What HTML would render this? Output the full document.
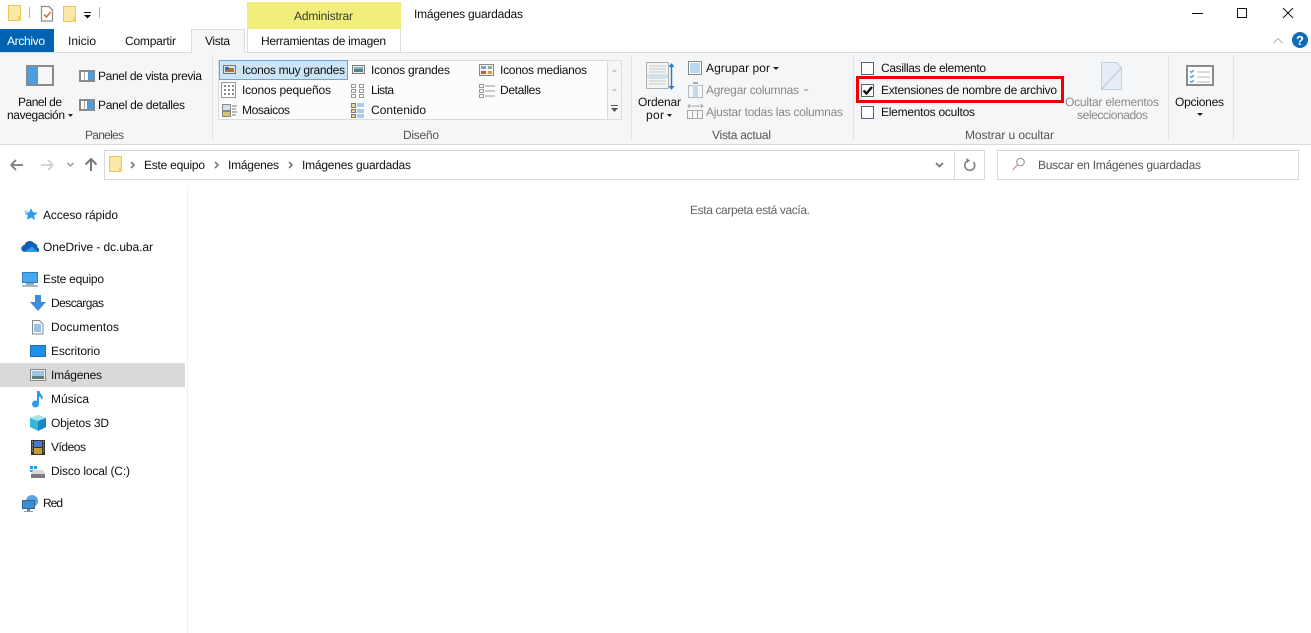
<!DOCTYPE html>
<html lang="es"><head><meta charset="utf-8"><title>Imágenes guardadas</title>
<style>
html,body{margin:0;padding:0;background:#fff;width:1311px;height:633px;overflow:hidden}
svg{display:block}
text{font-family:"Liberation Sans",sans-serif;font-size:12px;fill:#111}
</style></head><body>
<svg width="1311" height="633" viewBox="0 0 1311 633" xmlns="http://www.w3.org/2000/svg" text-rendering="geometricPrecision">
<defs>
<g id="fold"><rect x="0.5" y="0.5" width="12" height="15" fill="#fde9a6" stroke="#e8c85a"/><rect x="10" y="11" width="3" height="5" fill="#f3d060"/></g>
</defs>
<!-- title bar -->
<use href="#fold" x="8" y="5"/>
<rect x="29" y="7" width="1" height="11" fill="#b5b5b5"/>
<path d="M41.500 6.500h7.500l3.500 3.500v11h-11z" fill="#fff" stroke="#8d8d8d" stroke-width="1.300"/>
<path d="M44 14.500l2.500 2.500 4-5" fill="none" stroke="#e8632a" stroke-width="1.500"/>
<use href="#fold" x="63" y="6"/>
<rect x="84" y="12" width="7" height="1" fill="#111"/><path d="M84 15h7l-3.500 3.500z" fill="#111"/>
<rect x="99" y="7" width="1" height="11" fill="#b5b5b5"/>
<rect x="247" y="2" width="154" height="27" fill="#f1ee7c"/>
<text x="294" y="20" textLength="59" lengthAdjust="spacing" style="fill:#3c3c30">Administrar</text>
<text x="414" y="18" textLength="109" lengthAdjust="spacing">Imágenes guardadas</text>
<rect x="1192" y="13" width="11" height="1" fill="#111"/>
<rect x="1237.500" y="8.500" width="9" height="9" fill="none" stroke="#111"/>
<path d="M1283 8l10 10M1293 8l-10 10" stroke="#111" stroke-width="1" fill="none"/>
<!-- tabs -->
<rect x="0" y="29" width="54" height="23" fill="#0063b1"/>
<text x="7" y="45" textLength="38" lengthAdjust="spacing" style="fill:#fff">Archivo</text>
<text x="68" y="45" textLength="28" lengthAdjust="spacing">Inicio</text>
<text x="125" y="45" textLength="51" lengthAdjust="spacing">Compartir</text>
<rect x="247" y="29" width="1" height="23" fill="#dadbdc"/><rect x="400" y="29" width="1" height="23" fill="#dadbdc"/>
<text x="261" y="45" textLength="125" lengthAdjust="spacing">Herramientas de imagen</text>
<path d="M1273.500 43l4.500-4.500 4.500 4.500" fill="none" stroke="#c0c0c0" stroke-width="1.300"/>
<circle cx="1300" cy="40" r="8" fill="#0f6cbd"/>
<text x="1296" y="45" style="fill:#fff;font-size:13px;font-weight:bold">?</text>
<!-- ribbon -->
<rect x="0" y="52" width="1311" height="93" fill="#f5f6f7"/>
<rect x="0" y="52" width="1311" height="1" fill="#dadbdc"/>
<rect x="0" y="144" width="1311" height="1" fill="#dadbdc"/>
<rect x="191.500" y="29.500" width="53" height="23" fill="#f5f6f7" stroke="#dadbdc"/>
<rect x="192" y="51" width="52" height="3" fill="#f5f6f7"/>
<text x="205" y="45" textLength="25" lengthAdjust="spacing">Vista</text>
<!-- separators -->
<rect x="212" y="55" width="1" height="86" fill="#e1e2e3"/>
<rect x="631" y="55" width="1" height="86" fill="#e1e2e3"/>
<rect x="853" y="55" width="1" height="86" fill="#e1e2e3"/>
<rect x="1168" y="55" width="1" height="86" fill="#e1e2e3"/>
<rect x="1233" y="55" width="1" height="86" fill="#e1e2e3"/>
<!-- paneles -->
<rect x="27" y="66" width="26" height="19" fill="#f6f6f6" stroke="#8a8a8a" stroke-width="2"/>
<rect x="28" y="67" width="10" height="17" fill="#4a9fe3"/>
<text x="18" y="106" textLength="44" lengthAdjust="spacing">Panel de</text>
<text x="7" y="119" textLength="58" lengthAdjust="spacing">navegación</text>
<path d="M68 114h5l-2.500 3z" fill="#222"/>
<rect x="80" y="71" width="14" height="10" fill="#fff" stroke="#8a8a8a" stroke-width="2"/><rect x="88" y="72" width="5" height="8" fill="#4a9fe3"/><rect x="84" y="72" width="1" height="8" fill="#aaa"/>
<text x="98" y="80" textLength="104" lengthAdjust="spacing">Panel de vista previa</text>
<rect x="80" y="100" width="14" height="10" fill="#fff" stroke="#8a8a8a" stroke-width="2"/><rect x="87" y="101" width="6" height="8" fill="#4a9fe3"/><rect x="84" y="101" width="1" height="8" fill="#aaa"/>
<text x="98" y="109" textLength="87" lengthAdjust="spacing">Panel de detalles</text>
<text x="85" y="139" textLength="39" lengthAdjust="spacing" style="fill:#555">Paneles</text>
<!-- gallery -->
<rect x="218.500" y="60.500" width="403" height="59" fill="#fbfcfc" stroke="#dadbdc"/>
<rect x="607" y="61" width="14" height="58" fill="#f5f6f7"/><rect x="607" y="61" width="1" height="58" fill="#dadbdc"/>
<path d="M612 72h5l-2.500-3zM612 89h5l-2.500 3z" fill="#c8c8c8"/>
<rect x="611" y="105" width="7" height="1" fill="#555"/><path d="M611 108h7l-3.500 4z" fill="#555"/>
<rect x="219.500" y="60.500" width="128" height="19" fill="#cce4f8" stroke="#6ea5d8"/>
<rect x="223.500" y="65.500" width="12" height="8" fill="#d8e6e8" stroke="#777"/><rect x="225" y="68" width="9" height="4" fill="#c46a2a"/><rect x="225" y="67" width="4" height="3" fill="#3b6fb5"/>
<text x="242" y="74" textLength="103" lengthAdjust="spacing">Iconos muy grandes</text>
<rect x="352.500" y="65.500" width="12" height="8" fill="#e8eef0" stroke="#777"/><rect x="354" y="69" width="9" height="3" fill="#5f7f6e"/><rect x="354" y="67" width="9" height="2" fill="#7fb2dc"/>
<text x="371" y="74" textLength="79" lengthAdjust="spacing">Iconos grandes</text>
<rect x="479.500" y="64.500" width="14" height="11" fill="#f3f3f3" stroke="#888"/><rect x="481" y="66" width="5" height="3" fill="#7aa6c9"/><rect x="488" y="66" width="4" height="3" fill="#8fb27f"/><rect x="481" y="71" width="5" height="3" fill="#d2552c"/><rect x="488" y="71" width="4" height="3" fill="#d9a032"/>
<text x="500" y="74" textLength="87" lengthAdjust="spacing">Iconos medianos</text>
<rect x="221.500" y="82.500" width="14" height="15" fill="#fff" stroke="#999"/>
<path d="M224 85h2v2h-2zM228 85h2v2h-2zM232 85h2v2h-2zM224 89h2v2h-2zM228 89h2v2h-2zM232 89h2v2h-2zM224 93h2v2h-2zM228 93h2v2h-2zM232 93h2v2h-2z" fill="#8a8a8a"/>
<text x="242" y="94" textLength="89" lengthAdjust="spacing">Iconos pequeños</text>
<path d="M351.500 84.500h4v3h-4zM351.500 89.500h4v3h-4zM351.500 94.500h4v3h-4zM359.500 84.500h4v3h-4zM359.500 89.500h4v3h-4zM359.500 94.500h4v3h-4z" fill="#fff" stroke="#999"/>
<text x="371" y="94" textLength="23" lengthAdjust="spacing">Lista</text>
<path d="M479.500 84.500h4v3h-4zM479.500 89.500h4v3h-4zM479.500 94.500h4v3h-4z" fill="#fff" stroke="#999"/>
<path d="M485 86h10M485 91h10M485 96h10" stroke="#999"/>
<text x="500" y="94" textLength="41" lengthAdjust="spacing">Detalles</text>
<rect x="222.500" y="104.500" width="8" height="6" fill="#cfe2f0" stroke="#888"/><rect x="222.500" y="111.500" width="8" height="5" fill="#d8c070" stroke="#888"/>
<path d="M232 106h5M232 109h4M232 112h5M232 115h4" stroke="#777"/>
<text x="242" y="114" textLength="48" lengthAdjust="spacing">Mosaicos</text>
<path d="M351.500 103.500h4v4h-4zM351.500 109.500h4v3h-4zM351.500 114.500h4v3h-4z" fill="#e9d99a" stroke="#777"/>
<path d="M357 104h7M357 106h7M357 110h7M357 112h7M357 115h7M357 117h7" stroke="#5a9bd8"/>
<text x="371" y="114" textLength="55" lengthAdjust="spacing">Contenido</text>
<text x="403" y="139" textLength="36" lengthAdjust="spacing" style="fill:#555">Diseño</text>
<!-- vista actual -->
<rect x="646.500" y="62.500" width="22" height="26" fill="#f3f5f5" stroke="#b0b0b0"/>
<path d="M649 66h17M649 69h17M649 72h17M649 75h17M649 78h17M649 81h17M649 84h17" stroke="#c4cacc"/>
<rect x="647" y="74" width="21" height="4" fill="#cfe2ee"/>
<path d="M671.500 64v25" stroke="#2a7fc9" stroke-width="1.500"/><path d="M668.500 67l3-4 3 4zM668.500 86l3 4 3-4z" fill="#2a7fc9"/>
<text x="638" y="106" textLength="43" lengthAdjust="spacing">Ordenar</text>
<text x="646" y="119" textLength="18" lengthAdjust="spacing">por</text>
<path d="M667 114h5l-2.500 3z" fill="#222"/>
<rect x="688.500" y="61.500" width="13" height="13" fill="#fff" stroke="#888"/><rect x="690" y="63" width="10" height="10" fill="#b9d9f3"/>
<text x="706" y="72" textLength="64" lengthAdjust="spacing">Agrupar por</text>
<path d="M773 67h6l-3 3z" fill="#222"/>
<path d="M688.500 85.500h14v12h-14z" fill="#f5f6f7" stroke="#b8b8b8"/><rect x="693" y="85" width="5" height="12" fill="#c3d9ec"/><rect x="693" y="82" width="5" height="2" fill="#aaa"/>
<text x="706" y="94" textLength="93" lengthAdjust="spacing" style="fill:#8a8a8a">Agregar columnas</text>
<path d="M803 89h6l-3 3z" fill="#bbb"/>
<path d="M688 106h15M690 104l-2 2 2 2M701 104l2 2-2 2" fill="none" stroke="#aaa"/>
<path d="M687.500 110.500h15v8h-15zM692.500 110.500v8M697.500 110.500v8" fill="#f5f6f7" stroke="#aaa"/>
<text x="706" y="116" textLength="137" lengthAdjust="spacing" style="fill:#8a8a8a">Ajustar todas las columnas</text>
<text x="712" y="139" textLength="59" lengthAdjust="spacing" style="fill:#555">Vista actual</text>
<!-- mostrar u ocultar -->
<rect x="861.500" y="62.500" width="12" height="12" fill="#fff" stroke="#56617a"/>
<text x="881" y="72" textLength="105" lengthAdjust="spacing">Casillas de elemento</text>
<rect x="857.500" y="77.500" width="205" height="24" fill="none" stroke="#ee0000" stroke-width="3"/>
<rect x="861.500" y="84.500" width="12" height="12" fill="#fff" stroke="#56617a"/>
<path d="M863.500 90.500l3 3 5.500-6.500" fill="none" stroke="#111" stroke-width="2.400"/>
<text x="881" y="94" textLength="176" lengthAdjust="spacing">Extensiones de nombre de archivo</text>
<rect x="861.500" y="106.500" width="12" height="12" fill="#fff" stroke="#56617a"/>
<text x="881" y="116" textLength="94" lengthAdjust="spacing">Elementos ocultos</text>
<path d="M1101.500 62.500h15l5 5v22h-20z" fill="#e6edf8" stroke="#c3cfdf"/>
<path d="M1101.500 89.500l20-22" stroke="#b9c7d9" fill="none"/>
<text x="1065" y="106" textLength="94" lengthAdjust="spacing" style="fill:#8a8a8a">Ocultar elementos</text>
<text x="1077" y="119" textLength="71" lengthAdjust="spacing" style="fill:#8a8a8a">seleccionados</text>
<text x="965" y="139" textLength="89" lengthAdjust="spacing" style="fill:#555">Mostrar u ocultar</text>
<rect x="1187" y="66" width="26" height="19" fill="#fff" stroke="#8a8a8a" stroke-width="2"/>
<path d="M1190 71l1.500 1.500 2.500-2.500M1190 76l1.500 1.500 2.500-2.500M1190 81l1.500 1.500 2.500-2.500" fill="none" stroke="#4a9fe3" stroke-width="1.300"/>
<path d="M1197 72h13M1197 77h13M1197 82h13" stroke="#b5b5b5"/>
<text x="1175" y="106" textLength="49" lengthAdjust="spacing">Opciones</text>
<path d="M1197 113h6l-3 3z" fill="#222"/>
<!-- nav bar -->
<path d="M11 165h12M11 165l5-5M11 165l5 5" fill="none" stroke="#7a7a7a" stroke-width="1.800"/>
<path d="M53 165h-12M53 165l-5-5M53 165l-5 5" fill="none" stroke="#d0d0d0" stroke-width="1.800"/>
<path d="M67.500 163l3 3 3-3" fill="none" stroke="#9a9a9a" stroke-width="1.500"/>
<path d="M91 171v-12M85.500 164.500l5.500-5.500 5.500 5.500" fill="none" stroke="#7a7a7a" stroke-width="2"/>
<rect x="104.500" y="150.500" width="880" height="29" fill="#fff" stroke="#d9d9d9"/>
<rect x="954" y="151" width="1" height="28" fill="#d9d9d9"/>
<use href="#fold" x="109" y="156"/>
<path d="M131 162l3 3-3 3" fill="none" stroke="#808080" stroke-width="1.700"/>
<text x="144" y="169" textLength="61" lengthAdjust="spacing">Este equipo</text>
<path d="M215 162l3 3-3 3" fill="none" stroke="#808080" stroke-width="1.700"/>
<text x="228" y="169" textLength="51" lengthAdjust="spacing">Imágenes</text>
<path d="M289 162l3 3-3 3" fill="none" stroke="#808080" stroke-width="1.700"/>
<text x="302" y="169" textLength="109" lengthAdjust="spacing">Imágenes guardadas</text>
<path d="M936 163l3.500 3.500 3.500-3.500" fill="none" stroke="#777" stroke-width="1.800"/>
<path d="M973.500 162a5 5 0 1 1-5-1.500" fill="none" stroke="#808080" stroke-width="1.600"/><path d="M966 158l4 2.500-3 2.500z" fill="#808080"/>
<rect x="997.500" y="150.500" width="301" height="29" fill="#fff" stroke="#d9d9d9"/>
<circle cx="1020.500" cy="162" r="3.800" fill="none" stroke="#8a8a8a"/>
<path d="M1017.500 165l-5 5" stroke="#c8836a" fill="none"/>
<text x="1038" y="169" textLength="163" lengthAdjust="spacing" style="fill:#555">Buscar en Imágenes guardadas</text>
<!-- content -->
<rect x="187" y="187" width="1" height="446" fill="#f2f2f2"/>
<text x="690" y="214" textLength="120" lengthAdjust="spacing" style="fill:#666">Esta carpeta está vacía.</text>
<!-- nav pane -->
<rect x="0" y="363" width="185" height="24" fill="#d9d9d9"/>
<path d="M31 208l2 4.300 4.600.4-3.500 3 1 4.300-4.100-2.400-4 2.400 1-4.300-3.400-3 4.600-.4z" fill="#2f9be8"/><path d="M24 211h4M25 214h3M26 217h2" stroke="#8cc4ee"/>
<text x="43" y="219" textLength="75" lengthAdjust="spacing">Acceso rápido</text>
<path d="M25 252a3.500 3.500 0 0 1-.5-7 5.500 5.500 0 0 1 9.500-2 4.500 4.500 0 0 1 3.500 4.500 2.500 2.500 0 0 1 .5 4.500z" fill="#0f62b8"/><path d="M24 252l8-5.500 6 5.500z" fill="#2f9be8"/>
<text x="43" y="251" textLength="110" lengthAdjust="spacing">OneDrive - dc.uba.ar</text>
<rect x="22.500" y="272.500" width="15" height="10" fill="#4aa8ec" stroke="#2a7fc9"/><rect x="26" y="283" width="8" height="2" fill="#9ab"/><rect x="22" y="285" width="16" height="2" fill="#a5bccb"/>
<text x="43" y="283" textLength="61" lengthAdjust="spacing">Este equipo</text>
<path d="M35 295h6v7h5l-8 9-8-9h5z" fill="#3d8fdc"/>
<text x="51" y="307" textLength="53" lengthAdjust="spacing">Descargas</text>
<path d="M32.500 320.500h7l3.500 3.500v10h-10.500z" fill="#f5f5f5" stroke="#8a8a8a"/><path d="M34 325h7M34 327h7M34 329h7M34 331h7" stroke="#3d8fdc"/>
<text x="51" y="331" textLength="68" lengthAdjust="spacing">Documentos</text>
<rect x="30.500" y="345.500" width="15" height="11" fill="#1e90e8" stroke="#1670b8"/><rect x="30" y="356" width="16" height="1" fill="#1670b8"/>
<text x="51" y="355" textLength="49" lengthAdjust="spacing">Escritorio</text>
<rect x="30.500" y="369.500" width="15" height="11" fill="#f0f0f0" stroke="#8a8a8a"/><rect x="32" y="371" width="12" height="5" fill="#9cc6e6"/><rect x="32" y="376" width="12" height="3" fill="#5f7f6e"/>
<text x="51" y="379" textLength="51" lengthAdjust="spacing">Imágenes</text>
<path d="M37 391h2.500c.5 3 3 4 3.500 7.500l-1 1c-1-1.500-1.500-2.500-3-3v7.500a3.500 3.500 0 1 1-2-3.200z" fill="#2f9be8"/>
<text x="51" y="403" textLength="38" lengthAdjust="spacing">Música</text>
<path d="M38 415l8 3v9l-8 4-8-4v-9z" fill="#35b8d4"/><path d="M38 415l8 3-8 3-8-3z" fill="#a6e4ee"/><path d="M38 421l8-3v9l-8 4z" fill="#1886c8"/>
<text x="51" y="427" textLength="58" lengthAdjust="spacing">Objetos 3D</text>
<rect x="31" y="440" width="14" height="15" fill="#333"/><rect x="34" y="441" width="8" height="6" fill="#4a78c8"/><rect x="34" y="448" width="8" height="6" fill="#c89a38"/>
<path d="M32 442h1M32 445h1M32 448h1M32 451h1M43 442h1M43 445h1M43 448h1M43 451h1" stroke="#ddd"/>
<text x="51" y="451" textLength="35" lengthAdjust="spacing">Vídeos</text>
<path d="M30 466h3v3h-3zM34 466h3v3h-3zM30 470h3v2h-3z" fill="#1fa0e8"/>
<path d="M33 470h10l2 4v4H31v-4z" fill="#d6d6d6"/><rect x="31" y="474" width="14" height="4" fill="#7a7a7a"/><rect x="41" y="475" width="2" height="1" fill="#3ad04a"/>
<text x="51" y="475" textLength="79" lengthAdjust="spacing">Disco local (C:)</text>
<circle cx="32" cy="501" r="6" fill="#5aa5de"/>
<rect x="22.500" y="500.500" width="12" height="8" fill="#3a8fd2" stroke="#33648f"/><rect x="27" y="509" width="3" height="2" fill="#6b7f90"/><rect x="24" y="511" width="9" height="1" fill="#8a9aa8"/>
<text x="43" y="507" textLength="20" lengthAdjust="spacing">Red</text>
</svg>
</body></html>
